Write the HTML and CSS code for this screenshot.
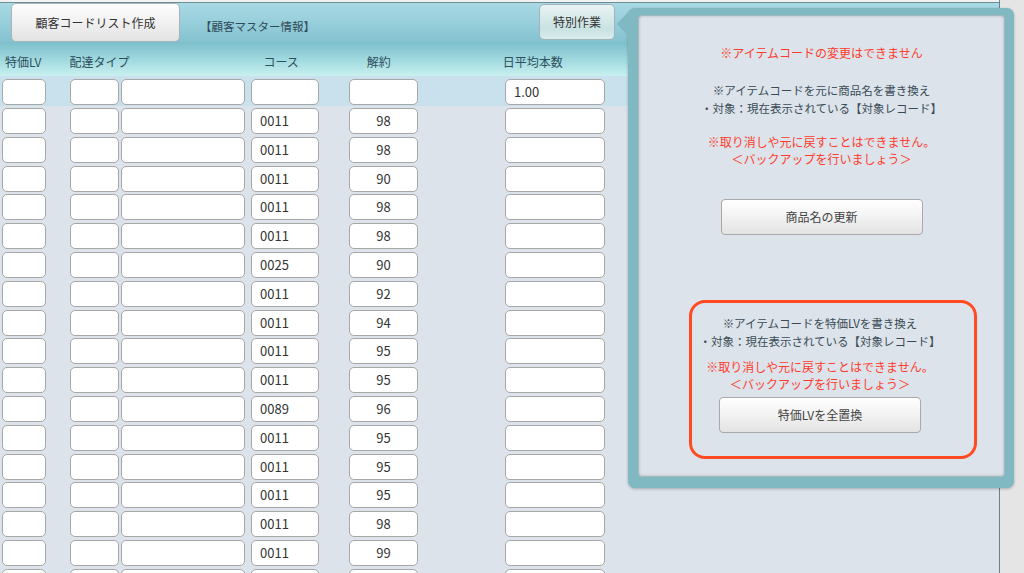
FILE: index.html
```html
<!DOCTYPE html>
<html lang="ja">
<head>
    <meta charset="UTF-8">
    <title>顧客マスター情報</title>
    <link rel="stylesheet" href="styles.css">
</head>
<body>

<div class="page">
    <div class="topline"></div>

    <div class="toolbar">
        <div class="tab-btn">顧客コードリスト作成</div>
        <div class="caption">【顧客マスター情報】</div>
        <div class="special-btn">特別作業</div>
    </div>

    <div class="col-head">
        <span class="h1">特価LV</span>
        <span class="h2">配達タイプ</span>
        <span class="h4">コース</span>
        <span class="h5">解約</span>
        <span class="h6">日平均本数</span>
    </div>

    <div class="rows">
        <div class="row row-first">
            <div class="cell c1"></div>
            <div class="cell c2"></div>
            <div class="cell c3"></div>
            <div class="cell c4"></div>
            <div class="cell c5"></div>
            <div class="cell c6">1.00</div>
        </div>
        <div class="row"><div class="cell c1"></div><div class="cell c2"></div><div class="cell c3"></div><div class="cell c4">0011</div><div class="cell c5">98</div><div class="cell c6"></div></div>
        <div class="row"><div class="cell c1"></div><div class="cell c2"></div><div class="cell c3"></div><div class="cell c4">0011</div><div class="cell c5">98</div><div class="cell c6"></div></div>
        <div class="row"><div class="cell c1"></div><div class="cell c2"></div><div class="cell c3"></div><div class="cell c4">0011</div><div class="cell c5">90</div><div class="cell c6"></div></div>
        <div class="row"><div class="cell c1"></div><div class="cell c2"></div><div class="cell c3"></div><div class="cell c4">0011</div><div class="cell c5">98</div><div class="cell c6"></div></div>
        <div class="row"><div class="cell c1"></div><div class="cell c2"></div><div class="cell c3"></div><div class="cell c4">0011</div><div class="cell c5">98</div><div class="cell c6"></div></div>
        <div class="row"><div class="cell c1"></div><div class="cell c2"></div><div class="cell c3"></div><div class="cell c4">0025</div><div class="cell c5">90</div><div class="cell c6"></div></div>
        <div class="row"><div class="cell c1"></div><div class="cell c2"></div><div class="cell c3"></div><div class="cell c4">0011</div><div class="cell c5">92</div><div class="cell c6"></div></div>
        <div class="row"><div class="cell c1"></div><div class="cell c2"></div><div class="cell c3"></div><div class="cell c4">0011</div><div class="cell c5">94</div><div class="cell c6"></div></div>
        <div class="row"><div class="cell c1"></div><div class="cell c2"></div><div class="cell c3"></div><div class="cell c4">0011</div><div class="cell c5">95</div><div class="cell c6"></div></div>
        <div class="row"><div class="cell c1"></div><div class="cell c2"></div><div class="cell c3"></div><div class="cell c4">0011</div><div class="cell c5">95</div><div class="cell c6"></div></div>
        <div class="row"><div class="cell c1"></div><div class="cell c2"></div><div class="cell c3"></div><div class="cell c4">0089</div><div class="cell c5">96</div><div class="cell c6"></div></div>
        <div class="row"><div class="cell c1"></div><div class="cell c2"></div><div class="cell c3"></div><div class="cell c4">0011</div><div class="cell c5">95</div><div class="cell c6"></div></div>
        <div class="row"><div class="cell c1"></div><div class="cell c2"></div><div class="cell c3"></div><div class="cell c4">0011</div><div class="cell c5">95</div><div class="cell c6"></div></div>
        <div class="row"><div class="cell c1"></div><div class="cell c2"></div><div class="cell c3"></div><div class="cell c4">0011</div><div class="cell c5">95</div><div class="cell c6"></div></div>
        <div class="row"><div class="cell c1"></div><div class="cell c2"></div><div class="cell c3"></div><div class="cell c4">0011</div><div class="cell c5">98</div><div class="cell c6"></div></div>
        <div class="row"><div class="cell c1"></div><div class="cell c2"></div><div class="cell c3"></div><div class="cell c4">0011</div><div class="cell c5">99</div><div class="cell c6"></div></div>
        <div class="row"><div class="cell c1"></div><div class="cell c2"></div><div class="cell c3"></div><div class="cell c4"></div><div class="cell c5"></div><div class="cell c6"></div></div>
    </div>
</div>

<!-- 特別作業 popover -->
<div class="popup">
    <div class="popup-arrow"></div>
    <div class="popup-inner">
        <p class="warn first">※アイテムコードの変更はできません</p>

        <p class="note gap1">※アイテムコードを元に商品名を書き換え<br>・対象：現在表示されている【対象レコード】</p>
        <p class="warn gap2">※取り消しや元に戻すことはできません。<br>＜バックアップを行いましょう＞</p>
        <div class="btn btn-name">商品名の更新</div>

        <div class="alert-box">
            <p class="note">※アイテムコードを特価LVを書き換え<br>・対象：現在表示されている【対象レコード】</p>
            <p class="warn gap3">※取り消しや元に戻すことはできません。<br>＜バックアップを行いましょう＞</p>
            <div class="btn btn-lv">特価LVを全置換</div>
        </div>
    </div>
</div>

</body>
</html>
```

FILE: styles.css
```css
body {
    margin: 0;
    height: 573px;
    overflow: hidden;
    background: #e5e5e5;
    font-family: "Noto Sans CJK JP", "Noto Sans", sans-serif;
    color: #333;
}

p {
    margin: 0;
}

.page {
    width: 999px;
    height: 573px;
    background: #dce3ea;
    border-right: 1px solid #62858f;
    overflow: hidden;
}

.topline {
    height: 2px;
    background: #f2f2f2;
    border-bottom: 1px solid #6c8c96;
}

/* toolbar */
.toolbar {
    height: 39px;
    display: flex;
    align-items: flex-start;
    background: linear-gradient(#a9dae5, #85c2d0);
}

.tab-btn {
    margin-left: 11px;
    width: 167px;
    height: 37px;
    border: 1px solid #a9b4b8;
    border-radius: 5px;
    background: linear-gradient(#fdfdfd, #eeeeee 60%, #e2e2e2);
    font-size: 12px;
    line-height: 37px;
    text-align: center;
    color: #333;
}

.caption {
    margin-left: 20px;
    margin-top: 15px;
    font-size: 11.5px;
    color: #2e4a58;
}

.special-btn {
    margin-left: 224px;
    margin-top: 1px;
    width: 74px;
    height: 34px;
    border: 1px solid #9fb4ba;
    border-radius: 5px;
    background: linear-gradient(#e9f3f3, #c9e2e2 70%, #d8ecec);
    font-size: 12px;
    line-height: 33px;
    text-align: center;
    color: #333;
}

/* column header */
.col-head {
    height: 34px;
    display: flex;
    align-items: flex-end;
    background: linear-gradient(#7dbfcc, #a6dde2 60%, #c8f0ef);
    font-size: 12px;
    color: #2e4f5c;
}

.col-head span {
    padding-bottom: 6px;
}

.h1 { margin-left: 5px; }
.h2 { margin-left: 28px; }
.h4 { margin-left: 134px; }
.h5 { margin-left: 68px; }
.h6 { margin-left: 112px; }

/* table rows */
.row {
    display: flex;
    height: 28.8px;
    align-items: flex-start;
    padding-top: 2px;
    box-sizing: border-box;
}

.row-first {
    height: 30px;
    padding-top: 3px;
    background: #c9e1ec;
}

.cell {
    height: 26px;
    box-sizing: border-box;
    background: #fff;
    border: 1px solid #a7a7a7;
    border-radius: 5px;
    font-size: 13px;
    line-height: 24px;
    color: #333;
    padding-left: 8px;
}

.c1 { margin-left: 2px; width: 44px; }
.c2 { margin-left: 24px; width: 49px; }
.c3 { margin-left: 2px; width: 124px; }
.c4 { margin-left: 6px; width: 68px; }
.c5 { margin-left: 30px; width: 69px; padding-left: 0; text-align: center; }
.c6 { margin-left: 87px; width: 100px; }

/* popover */
.popup {
    position: absolute;
    left: 628px;
    top: 8px;
    width: 386px;
    height: 480px;
    box-sizing: border-box;
    padding: 7px 9px 11px 10px;
    background: #80b9c1;
    border-radius: 7px;
    box-shadow: 0 1px 3px rgba(0, 0, 0, 0.25);
}

.popup-arrow {
    position: absolute;
    left: -11px;
    top: 4px;
    width: 0;
    height: 0;
    border-top: 12px solid transparent;
    border-bottom: 12px solid transparent;
    border-right: 11px solid #80b9c1;
}

.popup-inner {
    height: 100%;
    box-sizing: border-box;
    background: #dce3ea;
    border: 1px solid #a5b7bd;
    border-radius: 4px;
    box-shadow: inset 0 0 3px rgba(0, 0, 0, 0.2);
    padding-top: 28px;
    text-align: center;
}

.warn {
    color: #ff3b2b;
    font-size: 12px;
    line-height: 17px;
}

.warn.first {
    line-height: 18px;
}

.note {
    color: #3a4b56;
    font-size: 11.5px;
    line-height: 17.5px;
}

.gap1 { margin-top: 20px; }
.gap2 { margin-top: 16px; }
.gap3 { margin-top: 8px; }

.btn {
    width: 200px;
    height: 34px;
    margin: 0 auto;
    border: 1px solid #a9a9a9;
    border-radius: 4px;
    background: linear-gradient(#ffffff, #f2f2f2 50%, #e3e3e3);
    font-size: 12px;
    line-height: 34px;
    color: #444;
}

.btn-name {
    margin-top: 32px;
}

.alert-box {
    margin-top: 65px;
    margin-left: 50px;
    width: 288px;
    height: 159px;
    box-sizing: border-box;
    border: 3px solid #ff4a22;
    border-radius: 16px;
    padding: 12px 26px 0 0;
}

.btn-lv {
    margin-top: 5px;
}
```
